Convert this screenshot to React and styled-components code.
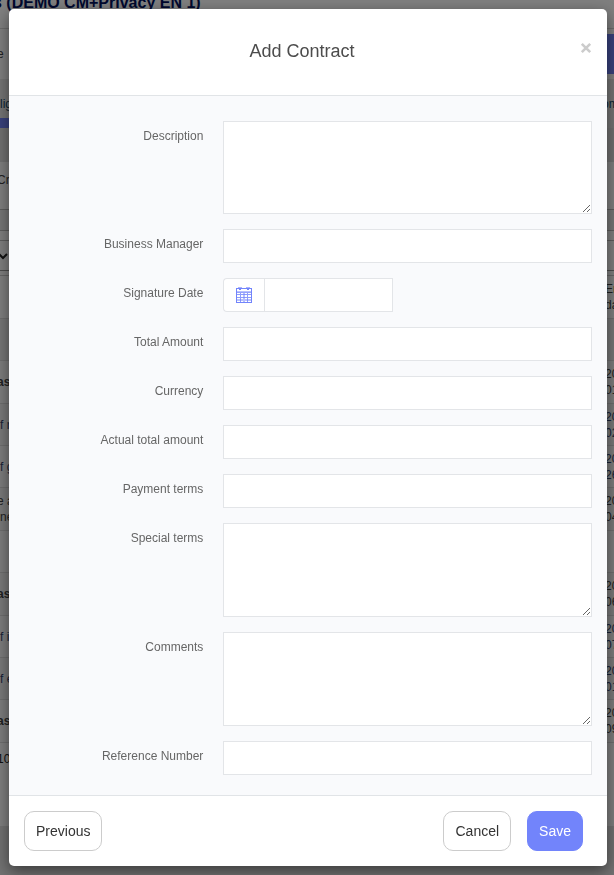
import React from "react";
import styled, { createGlobalStyle } from "styled-components";

const GlobalStyle = createGlobalStyle`
  *, *::before, *::after { box-sizing: border-box; }
  body {
    margin: 0;
    font-family: "Liberation Sans", Arial, sans-serif;
    font-size: 14px;
    color: #333;
  }
`;

/* ---------- Page behind the dialog ---------- */

const Page = styled.main`
  display: flex;
  flex-direction: column;
  height: 100vh;
  overflow: hidden;
  background: #fff;
`;

const PageTitle = styled.h1`
  flex: none;
  height: 29px;
  margin: 0;
  border-bottom: 1px solid #d8d8d8;
  font-size: 16px;
  line-height: 6px;
  text-indent: -7px;
  white-space: nowrap;
  color: #00105c;
`;

const Band = styled.div`
  flex: none;
  display: flex;
  justify-content: space-between;
  align-items: center;
  height: ${(p) => p.$height}px;
  padding-top: ${(p) => p.$top || 0}px;
  padding-bottom: ${(p) => p.$bottom || 0}px;
  background: ${(p) => p.$tone || "#fff"};
  border-bottom: ${(p) => (p.$line ? `1px solid ${p.$line}` : "0")};
  color: ${(p) => p.$color || "#444"};
  font-size: 12px;
  line-height: 16px;
`;

const EdgeCell = styled.span`
  width: 9px;
  white-space: pre;
  text-indent: ${(p) => (p.$cut ? "-3px" : "0")};
`;

const PageButton = styled.button`
  width: 7px;
  height: 40px;
  border: 0;
  padding: 0;
  background: #7284fb;
`;

const ActiveMark = styled.span`
  width: 9px;
  height: 10px;
  background: #7284fb;
`;

const PageFoot = styled.div`
  flex: 1;
  background: #e4e4e4;
`;

/* ---------- Dialog ---------- */

const Overlay = styled.div`
  position: fixed;
  inset: 0;
  overflow: auto;
  padding: 9px 7px 9px 9px;
  background: rgba(0, 0, 0, 0.5);
`;

const Dialog = styled.section`
  background: #fff;
  border-radius: 5px;
  box-shadow: 0 5px 15px rgba(0, 0, 0, 0.5);
`;

const Header = styled.header`
  display: grid;
  grid-template-columns: 12px 1fr 12px;
  align-items: center;
  padding: 30px 15px 32px;
  border-bottom: 1px solid #e1e4e7;
`;

const Title = styled.h2`
  grid-column: 2;
  margin: 0;
  padding-right: 12px;
  font-size: 18px;
  line-height: 24px;
  font-weight: normal;
  text-align: center;
  color: #4c4c4c;
`;

const Close = styled.button`
  align-self: start;
  display: grid;
  place-items: center;
  height: 18px;
  padding: 0;
  border: 0;
  background: none;
  color: #ccc;
  cursor: pointer;
`;

const Body = styled.div`
  display: grid;
  gap: 15px;
  padding: 25px 0 20px;
  background: #f9fafc;
  border-bottom: 1px solid #e1e4e7;
`;

const Row = styled.div`
  display: grid;
  grid-template-columns: 1fr 2fr;
`;

const Label = styled.label`
  padding: 7px 5px 0 15px;
  font-size: 12px;
  line-height: 16px;
  text-align: right;
  color: #666;
`;

const Field = styled.div`
  display: flex;
  padding: 0 15px;
`;

const Input = styled.input`
  width: ${(p) => p.$width || "100%"};
  height: 34px;
  padding: 6px 12px;
  border: 1px solid #e3e5e8;
  border-radius: 0;
  background: #fff;
  font: inherit;
  outline: 0;
`;

const TextArea = styled.textarea`
  display: block;
  width: 100%;
  height: ${(p) => p.$height}px;
  padding: 6px 12px;
  border: 1px solid #e3e5e8;
  background: #fff;
  font: inherit;
  resize: vertical;
  outline: 0;
`;

const DateButton = styled.button`
  display: grid;
  place-items: center;
  width: 41px;
  height: 34px;
  padding: 0;
  border: 1px solid #e3e5e8;
  border-right: 0;
  border-radius: 4px 0 0 4px;
  background: #fff;
  color: #7284fb;
`;

const Footer = styled.footer`
  display: flex;
  justify-content: space-between;
  padding: 15px 24px 15px 15px;
`;

const Actions = styled.div`
  display: flex;
  gap: 16px;
`;

const Button = styled.button`
  height: 40px;
  padding: 0 11px;
  border: 1px solid ${(p) => (p.$primary ? "#7284fb" : "#ccc")};
  border-radius: 10px;
  background: ${(p) => (p.$primary ? "#7284fb" : "#fff")};
  color: ${(p) => (p.$primary ? "#fff" : "#333")};
  font: 14px "Liberation Sans", Arial, sans-serif;
  cursor: pointer;
`;

const CalendarIcon = () => (
  <svg width="16" height="16" viewBox="0 0 16 16" fill="none" stroke="currentColor" aria-hidden="true" shapeRendering="crispEdges">
    <path d="M0.5 1v14.5h15V1" />
    <path d="M0 1.5h16" />
    <path d="M1 4.5h14" strokeWidth="2" opacity=".5" />
    <path d="M1 7.5h14M1 10.5h14M4.5 6v9M11.5 6v9" opacity=".8" />
    <path d="M7.5 6v9M8.5 6v9M1 12.5h14M1 13.5h14M1 5.5h14" opacity=".5" />
    <path d="M2 .5h4M10 .5h4" opacity=".6" />
    <path d="M3 2.5h2M11 2.5h2" />
  </svg>
);

const CloseIcon = () => (
  <svg width="12" height="12" viewBox="0 0 12 12" fill="none" stroke="currentColor" strokeWidth="2.6" aria-hidden="true">
    <path d="M1.8 1.8l8.4 8.4M10.2 1.8l-8.4 8.4" />
  </svg>
);

const ChevronIcon = () => (
  <svg width="9" height="8" viewBox="0 0 9 8" fill="none" stroke="#222" strokeWidth="2" aria-hidden="true">
    <path d="M-1 2l4 4 4-4" />
  </svg>
);

const tableRows = [
  { left: "as", right: "20\n01", bold: true, height: 43 },
  { left: "f r", right: "20\n02", height: 42, link: true },
  { left: "f g", right: "20\n26", height: 42, link: true },
  { left: "e a\nne", right: "20\n04", height: 43 },
  { left: "", right: "", height: 42 },
  { left: "as", right: "20\n06", bold: true, height: 43 },
  { left: "f i", right: "20\n07", height: 42, link: true },
  { left: "f e", right: "20\n01", height: 42, link: true },
  { left: "as", right: "20\n09", bold: true, height: 43 },
];

const fields = [
  { id: "description", label: "Description", type: "area", height: 93 },
  { id: "manager", label: "Business Manager" },
  { id: "signature", label: "Signature Date", type: "date" },
  { id: "total", label: "Total Amount" },
  { id: "currency", label: "Currency" },
  { id: "actual", label: "Actual total amount" },
  { id: "payment", label: "Payment terms" },
  { id: "special", label: "Special terms", type: "area", height: 94 },
  { id: "comments", label: "Comments", type: "area", height: 94 },
  { id: "reference", label: "Reference Number" },
];

function Control({ id, type, height }) {
  if (type === "area") return <TextArea id={id} $height={height} />;
  if (type === "date") {
    return (
      <>
        <DateButton type="button" aria-label="Choose date">
          <CalendarIcon />
        </DateButton>
        <Input id={id} type="text" $width="129px" />
      </>
    );
  }
  return <Input id={id} type="text" />;
}

function ContractsPage() {
  return (
    <Page inert>
      <PageTitle>s (DEMO CM+Privacy EN 1)</PageTitle>
      <Band $height={50}>
        <EdgeCell $cut>e</EdgeCell>
        <PageButton type="button" />
      </Band>
      <Band $height={39} $top={10} $tone="#e9e9e9" $color="#174a68">
        <EdgeCell>lig</EdgeCell>
        <EdgeCell $cut>om</EdgeCell>
      </Band>
      <Band $height={10} $tone="#e9e9e9">
        <ActiveMark />
      </Band>
      <Band $height={34} $tone="#e2e2e2" />
      <Band $height={48} $bottom={12} $line="#bbb">
        <EdgeCell $cut>Cr</EdgeCell>
      </Band>
      <Band $height={21} $tone="#eee" $line="#bbb" />
      <Band $height={10} $line="#bbb" />
      <Band $height={30} $line="#999">
        <ChevronIcon />
      </Band>
      <Band $height={5} $line="#ccc" />
      <Band $height={43} $line="#ddd">
        <EdgeCell />
        <EdgeCell>{"En\nda"}</EdgeCell>
      </Band>
      <Band $height={42} $tone="#eee" $line="#ddd" />
      {tableRows.map((row, i) => (
        <Band
          key={i}
          $height={row.height}
          $tone={i % 2 ? "#f4f4f4" : "#fafafa"}
          $line="#ddd"
          $color={row.link ? "#34466f" : "#444"}
        >
          <EdgeCell $cut={!row.link}>{row.bold ? <b>{row.left}</b> : row.left}</EdgeCell>
          <EdgeCell>{row.right}</EdgeCell>
        </Band>
      ))}
      <Band $height={32} $color="#222">
        <EdgeCell $cut>10</EdgeCell>
      </Band>
      <Band $height={51} />
      <PageFoot />
    </Page>
  );
}

export default function App() {
  return (
    <>
      <GlobalStyle />
      <ContractsPage />
      <Overlay>
        <Dialog role="dialog" aria-modal="true" aria-labelledby="dialog-title">
          <Header>
            <Title id="dialog-title">Add Contract</Title>
            <Close type="button" aria-label="Close">
              <CloseIcon />
            </Close>
          </Header>
          <Body>
            {fields.map((f) => (
              <Row key={f.id}>
                <Label htmlFor={f.id}>{f.label}</Label>
                <Field>
                  <Control id={f.id} type={f.type} height={f.height} />
                </Field>
              </Row>
            ))}
          </Body>
          <Footer>
            <Button type="button">Previous</Button>
            <Actions>
              <Button type="button">Cancel</Button>
              <Button type="button" $primary>Save</Button>
            </Actions>
          </Footer>
        </Dialog>
      </Overlay>
    </>
  );
}
